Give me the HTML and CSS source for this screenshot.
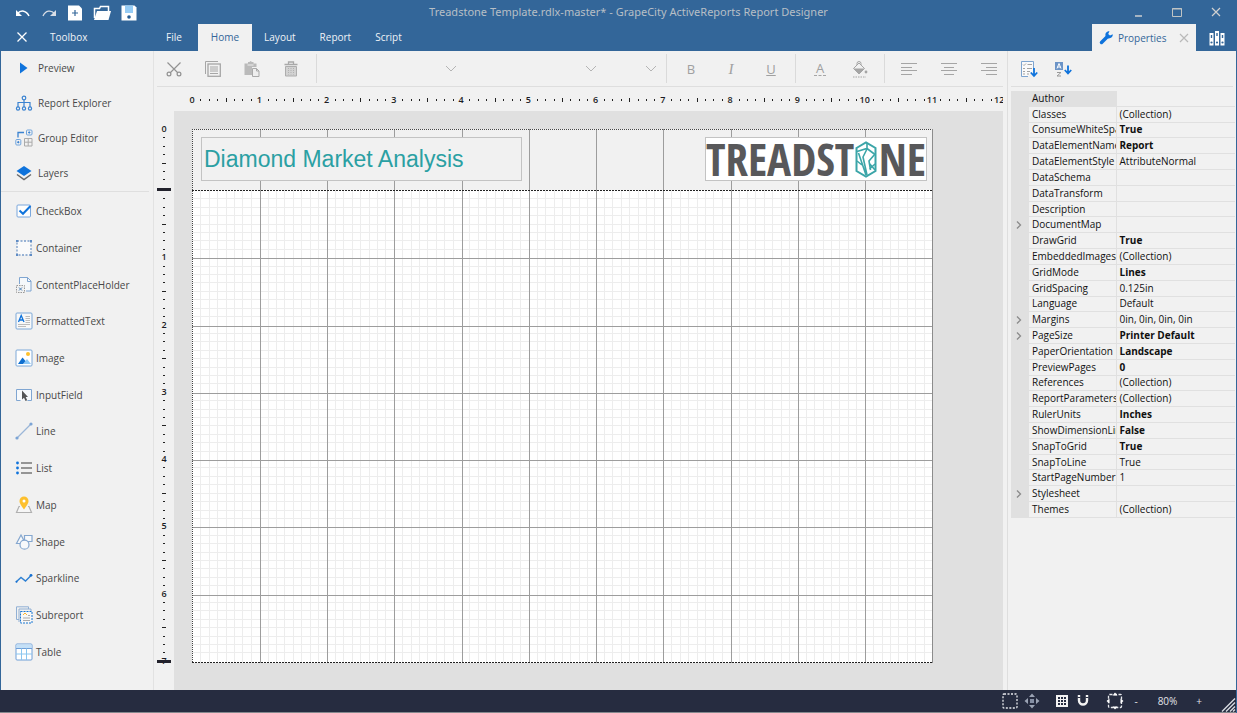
FILE: index.html
```
<!DOCTYPE html>
<html lang="en">
<head>
<meta charset="utf-8">
<title>Treadstone Template.rdlx-master* - GrapeCity ActiveReports Report Designer</title>
<link rel="stylesheet" href="styles.css">
</head>
<body>
<div class="app">
  <header class="header">
    <div class="titlebar">
      <div class="quick">
        <button aria-label="Undo"><svg width="16" height="16" viewBox="0 0 16 16"><path d="M2.500 8.500C6 4.500 11.500 5.500 14 11" fill="none" stroke="#fff" stroke-width="1.500"/><path d="M1 5v6h6z" fill="#fff"/></svg></button>
        <button aria-label="Redo"><svg width="16" height="16" viewBox="0 0 16 16"><path d="M13.500 8.500C10 4.500 4.500 5.500 2 11" fill="none" stroke="#d8dde5" stroke-width="1.300"/><path d="M15 5v6H9z" fill="#d8dde5"/></svg></button>
        <button aria-label="New"><svg width="16" height="16" viewBox="0 0 16 16"><path d="M1 .5h11l3 3v12H1z" fill="#fff"/><path d="M8 5v6M5 8h6" stroke="#336699" stroke-width="1.200"/></svg></button>
        <button aria-label="Open"><svg width="18" height="16" viewBox="0 0 18 16"><path d="M1.500 13V3.500h5l1-2h8V6" fill="none" stroke="#fff" stroke-width="1.500"/><path d="M1 15L4 6h14l-2.500 9z" fill="#fff"/></svg></button>
        <button aria-label="Save"><svg width="16" height="16" viewBox="0 0 16 16"><path d="M.5.500h13l2 2v13H.5z" fill="#fff"/><path d="M4 .5h8V8H4z" fill="#96ccf5"/><circle cx="8" cy="12" r="1.800" fill="#245c94"/></svg></button>
      </div>
      <h1 class="title">Treadstone Template.rdlx-master* - GrapeCity ActiveReports Report Designer</h1>
      <div class="window-buttons">
        <button aria-label="Minimize"><svg width="12" height="12" viewBox="0 0 12 12"><path d="M3 10h7" stroke="#c3c8cd" stroke-width="1.600"/></svg></button>
        <button aria-label="Maximize"><svg width="12" height="12" viewBox="0 0 12 12"><path d="M1.500 2.500h9v8h-9zM1 3h10" fill="none" stroke="#c0c4c4"/></svg></button>
        <button aria-label="Close"><svg width="12" height="12" viewBox="0 0 12 12"><path d="M2 2l8 8M10 2l-8 8" stroke="#d0d0d0" stroke-width="1.200"/></svg></button>
      </div>
    </div>
    <div class="tabbar">
      <div class="toolbox-head">
        <button aria-label="Close toolbox"><svg width="12" height="12" viewBox="0 0 12 12"><path d="M1.500 1.500l9 9M10.500 1.500l-9 9" stroke="#fff" stroke-width="1.300"/></svg></button>
        <span>Toolbox</span>
      </div>
      <nav class="tabs">
        <button class="tab file">File</button>
        <button class="tab home active">Home</button>
        <button class="tab">Layout</button>
        <button class="tab">Report</button>
        <button class="tab">Script</button>
      </nav>
      <div class="side-tabs">
        <button class="tab active props-tab">
          <svg width="15" height="15" viewBox="0 0 15 15"><path d="M2.500 12.500L8 7" stroke="#0f73dc" stroke-width="3.500" stroke-linecap="round"/><path d="M13.800 4.200L11 5.500 9.200 3.900 10.500 1.200C7.500 1 5.700 3.500 6.700 6.200L8.500 8.200C11.500 9 14 7 13.800 4.200z" fill="#0f73dc"/></svg>
          <span>Properties</span>
          <svg class="tab-close" width="10" height="10" viewBox="0 0 10 10"><path d="M1 1l8 8M9 1L1 9" stroke="#b9b9b9" stroke-width="1.200"/></svg>
        </button>
        <button class="library" aria-label="Layers list"><svg width="16" height="16" viewBox="0 0 16 16"><path d="M.5 3h4v12.500h-4zM6 1h4v14.500H6zM11.500 3h4v12.500h-4z" fill="#fff"/><path d="M2.500 5v3M8 3v3M13.500 5v3" stroke="#336699" stroke-width="1.400"/><circle cx="2.500" cy="12.500" r="1.100" fill="#336699"/><circle cx="8" cy="12.500" r="1.100" fill="#336699"/><circle cx="13.500" cy="12.500" r="1.100" fill="#336699"/></svg></button>
      </div>
    </div>
  </header>

  <div class="main">
    <aside class="toolbox">
      <div class="panels">
        <button class="item"><svg width="18" height="18" viewBox="0 0 18 18"><path d="M5 3.500v11L12.500 9z" fill="#0f73dc"/></svg>Preview</button>
        <button class="item"><svg width="18" height="18" viewBox="0 0 18 18" fill="none" stroke="#3b83d1" stroke-width="1.200"><circle cx="9" cy="4" r="1.800"/><path d="M9 6v7M3 13V8.500h12V13"/><circle cx="3" cy="14.500" r="1.600"/><circle cx="9" cy="14.500" r="1.600"/><circle cx="15" cy="14.500" r="1.600"/></svg>Report Explorer</button>
        <button class="item"><svg width="18" height="18" viewBox="0 0 18 18" fill="none" stroke="#3b83d1"><path d="M3 8.500V3.500h6" stroke-width="1.300"/><rect x="11.500" y="1" width="5.500" height="5" rx="1" stroke="#6fa4dd"/><circle cx="14.200" cy="3.500" r=".7" fill="#1670d0"/><rect x=".8" y="10.500" width="5" height="5.500" rx="1" stroke="#6fa4dd"/><circle cx="3.300" cy="13.200" r=".7" fill="#1670d0"/><path d="M9.500 9.500h7.500v7.500h-7.500zM13.200 9.500v7.500M9.500 13.200h7.500" stroke="#aaa"/></svg>Group Editor</button>
        <button class="item"><svg width="18" height="18" viewBox="0 0 18 18"><path d="M2 10.500l7 5 7-5" fill="none" stroke="#686868" stroke-width="1.500"/><path d="M9 2l7.500 5L9 12 1.500 7z" fill="#0f73dc"/></svg>Layers</button>
      </div>
      <div class="controls">
        <button class="item"><svg width="18" height="18" viewBox="0 0 18 18"><rect x="2" y="3" width="13.500" height="12" rx="1" fill="#fdfdfd" stroke="#7aa7dc"/><path d="M4.500 8.500L8 11.800 15.500 4" fill="none" stroke="#0f73dc" stroke-width="2"/></svg>CheckBox</button>
        <button class="item"><svg width="18" height="18" viewBox="0 0 18 18"><rect x="2" y="2" width="14" height="14" fill="#fafafa" stroke="#799cc9" stroke-width="1.300" stroke-dasharray="2 1.500"/><path d="M1 1h2v2H1zM15 1h2v2h-2zM1 15h2v2H1zM15 15h2v2h-2z" fill="#5f8cc5"/></svg>Container</button>
        <button class="item"><svg width="18" height="18" viewBox="0 0 18 18" fill="none"><path d="M4.500 8V1.500h8l3.500 3.500v10h-5" fill="#f5f8fb" stroke="#7fa5d1"/><path d="M12.500 1.500v4H16" stroke="#7fa5d1"/><rect x="1.500" y="9.500" width="8" height="7" fill="#f1f1f1" stroke="#999" stroke-dasharray="1.500 1"/><path d="M4 11.500l3 3M7 11.500l-3 3" stroke="#477fb8"/></svg>ContentPlaceHolder</button>
        <button class="item"><svg width="18" height="18" viewBox="0 0 18 18"><rect x="1" y="1" width="16" height="16" rx="1" fill="#f8f8f8" stroke="#7ca8d8"/><path d="M3.500 10L6.200 3.500 9 10M4.500 8h3.500" fill="none" stroke="#0f73dc" stroke-width="1.300"/><path d="M10.500 4.500H15M10.500 6.500H15M10.500 8.500H15M10.500 10.500H15M3 12.500h12M3 14.500h8" stroke="#bcbcbc"/></svg>FormattedText</button>
        <button class="item"><svg width="18" height="18" viewBox="0 0 18 18"><rect x="1" y="1" width="16" height="16" rx="1" fill="#fff" stroke="#7ca8d8"/><path d="M8 15l4-5 4 5z" fill="#8bc8f7"/><path d="M3 15l4.500-6.500L10.500 12 8 15z" fill="#0f6fd0"/><circle cx="13" cy="5" r="2" fill="#fdc02e"/></svg>Image</button>
        <button class="item"><svg width="18" height="18" viewBox="0 0 18 18"><path d="M5.500 14.500H1.500v-11h15v11h-4" fill="#f7f9fb" stroke="#80a6d2"/><path d="M7 4.500v9l2-1.800 1.500 3.300 1.700-.8-1.500-3.200H13z" fill="#555"/></svg>InputField</button>
        <button class="item"><svg width="18" height="18" viewBox="0 0 18 18"><path d="M2 16L16 2" stroke="#9bb6d8" stroke-width="1.300"/><circle cx="2" cy="16" r="1.600" fill="#7ca4d5"/><circle cx="16" cy="2" r="1.600" fill="#7ca4d5"/></svg>Line</button>
        <button class="item"><svg width="18" height="18" viewBox="0 0 18 18"><path d="M6 4h11M6 9h11M6 14h11" stroke="#777" stroke-width="1.700"/><circle cx="2.500" cy="4" r="1.400" fill="#0f73dc"/><circle cx="2.500" cy="9" r="1.400" fill="#0f73dc"/><circle cx="2.500" cy="14" r="1.400" fill="#0f73dc"/></svg>List</button>
        <button class="item"><svg width="18" height="18" viewBox="0 0 18 18"><path d="M5 10.500H4L1.500 16.500h15L14 10.500h-1" fill="#f6f6f6" stroke="#b0b0b0" stroke-width="1.200"/><path d="M9 13.500C6 9 4.500 7.500 4.500 5a4.500 4.500 0 0 1 9 0c0 2.500-1.500 4-4.500 8.500z" fill="#fdc02e"/><circle cx="9" cy="5" r="1.500" fill="#fff"/></svg>Map</button>
        <button class="item"><svg width="18" height="18" viewBox="0 0 18 18" fill="#f7f9fb" stroke="#85a7cf" stroke-width="1.200"><path d="M6 2l4.500 8.500h-9z"/><path d="M9.500 2.500h7.500v6h-7.500z"/><circle cx="9.500" cy="11.700" r="4.500"/></svg>Shape</button>
        <button class="item"><svg width="18" height="18" viewBox="0 0 18 18"><path d="M1 13l5-4.500 4.500 3.500L16 6.500" fill="none" stroke="#2e80d3" stroke-width="1.400"/><circle cx="1.500" cy="12.700" r="1" fill="#1670d0"/><circle cx="16" cy="6.300" r="1.400" fill="#1670d0"/></svg>Sparkline</button>
        <button class="item"><svg width="18" height="18" viewBox="0 0 18 18" fill="none"><path d="M4 13.500H1.500V.8h12V3M4 16V3h12v2" stroke="#91b0d4"/><rect x="5.500" y="5.500" width="11.500" height="11.500" fill="#f8f8f8" stroke="#1976d2" stroke-dasharray="2 1"/><path d="M8 9l2-2 2 2" stroke="#fdb72e"/><path d="M8 12h7M8 14.500h7M13 9.500h2" stroke="#aaa"/></svg>Subreport</button>
        <button class="item"><svg width="18" height="18" viewBox="0 0 18 18"><rect x="1" y="1" width="16" height="16" rx="1" fill="#fff" stroke="#6f9fd8"/><path d="M1.500 1.500h15v4h-15z" fill="#c4e0f7"/><path d="M1 5.500h16" stroke="#6f9fd8"/><path d="M1 11h16M6.500 5.500V17M11.500 5.500V17" stroke="#8ac6ef"/></svg>Table</button>
      </div>
    </aside>

    <main class="designer">
      <div class="toolbar">
        <div class="group edit">
          <button aria-label="Cut"><svg width="16" height="16" viewBox="0 0 16 16" fill="none" stroke="#929292" stroke-width="1.200"><path d="M1.500 1.500L12 12M14.500 1.500L4 12"/><circle cx="3" cy="13" r="1.900"/><circle cx="13" cy="13" r="1.900"/></svg></button>
          <button aria-label="Copy"><svg width="16" height="16" viewBox="0 0 16 16" fill="none" stroke="#a6a6a6"><path d="M.5 13V.5H13" /><rect x="3" y="3" width="12.300" height="12.300" stroke-width="1.300"/><path d="M5 6h8M5 8h8M5 10h8M5 12.500h8"/></svg></button>
          <button aria-label="Paste"><svg width="16" height="16" viewBox="0 0 16 16"><path d="M.5 2.500H4V1h1.500L6.500 0 8 1h1.500v1.500h3V6H8v8H.5z" fill="#bababa"/><path d="M3.500 4h6" stroke="#eee"/><path d="M8.500 7.500h4l2.500 2.500v5.500H8.500z" fill="#eee" stroke="#a9a9a9"/><path d="M12.500 7.500V10H15" fill="none" stroke="#a9a9a9"/></svg></button>
          <button aria-label="Delete"><svg width="16" height="16" viewBox="0 0 16 16"><path d="M1.500 3.500h13M5.500 3V1h5v2" fill="none" stroke="#a9a9a9" stroke-width="1.300"/><path d="M2.500 5.500h11V15h-11z" fill="#d2d2d2" stroke="#adadad"/><path d="M5.500 7v6.500M8 7v6.500M10.500 7v6.500" stroke="#b1b1b1" stroke-dasharray="1 1"/></svg></button>
        </div>
        <div class="group fonts">
          <label class="combo wide"><select aria-label="Font"></select><svg width="12" height="8" viewBox="0 0 12 8"><path d="M1 1l5 5 5-5" fill="none" stroke="#b4b4b4"/></svg></label>
          <label class="combo wide"><select aria-label="Style"></select><svg width="12" height="8" viewBox="0 0 12 8"><path d="M1 1l5 5 5-5" fill="none" stroke="#b4b4b4"/></svg></label>
          <label class="combo"><select aria-label="Size"></select><svg width="12" height="8" viewBox="0 0 12 8"><path d="M1 1l5 5 5-5" fill="none" stroke="#b4b4b4"/></svg></label>
        </div>
        <div class="group">
          <button class="bold">B</button>
          <button class="italic">I</button>
          <button class="underline">U</button>
        </div>
        <div class="group">
          <button class="color"><span>A</span></button>
          <button aria-label="Fill color"><svg width="16" height="18" viewBox="0 0 16 18"><path d="M5 5V3.500a2 2 0 0 1 4 0V5" fill="none" stroke="#a5a5a5"/><path d="M7 3L12.500 8.500 7 14 1.500 8.500z" fill="#f1f1f1" stroke="#a5a5a5"/><path d="M1.500 8.500h11L7 14z" fill="#a5a5a5"/><circle cx="14" cy="12" r="1.400" fill="#a5a5a5"/><path d="M1 17h13" stroke="#a5a5a5" stroke-dasharray="1.500 1"/></svg></button>
        </div>
        <div class="group">
          <button aria-label="Align left"><svg width="16" height="14" viewBox="0 0 16 14"><path d="M0 1.500h16M0 5.500h11M0 8.500h16M0 12.500h11" stroke="#a5a5a5"/></svg></button>
          <button aria-label="Align center"><svg width="16" height="14" viewBox="0 0 16 14"><path d="M0 1.500h16M3 5.500h10M0 8.500h16M3 12.500h10" stroke="#a5a5a5"/></svg></button>
          <button aria-label="Align right"><svg width="16" height="14" viewBox="0 0 16 14"><path d="M0 1.500h16M5 5.500h11M0 8.500h16M5 12.500h11" stroke="#a5a5a5"/></svg></button>
        </div>
      </div>
      <svg class="ruler-h" id="ruler-h"></svg>
      <div class="workspace">
        <svg class="ruler-v" id="ruler-v"></svg>
        <div class="canvas">
          <div class="sheet">
            <svg class="grid" id="grid"></svg>
            <div class="page-header">
              <div class="textbox">Diamond Market Analysis</div>
              <div class="logo">
                <span>TREADST</span>
                <svg width="22" height="37" viewBox="0 0 22 37" fill="none" stroke="#3ba5a8" stroke-width="2"><path d="M1.500 7L11 1.500 20.500 7V30L11 35.500 1.500 30z"/><path d="M2 10.500l10-3 8 6M12 7.500V2M3.500 12l7.500 22M12 8l-4 8 4 18M20 13l-6 7 1.500 9M2 20l5 4M14.500 28l5.500-5M14 22l6 7" stroke-width="1.600"/></svg>
                <span>NE</span>
              </div>
            </div>
          </div>
        </div>
      </div>
    </main>

    <aside class="properties">
      <div class="prop-tools">
        <button aria-label="Categorized"><svg width="18" height="18" viewBox="0 0 18 18" fill="none"><path d="M8 16.500H1.500V1.500h12V10" fill="#fafafa" stroke="#7da4d0"/><path d="M3 4.500l1 1 2-2M7.500 4.500h4.500M3 8.500h2M7 8.500h5M3 11.500h2M7 11.500h3M3 14h2M7 14h2" stroke="#a2a2a2"/><path d="M14 8v8M10.800 12.500L14 16l3.200-3.500" stroke="#0f73dc" stroke-width="1.800"/></svg></button>
        <button aria-label="Sort alphabetically"><svg width="18" height="18" viewBox="0 0 18 18" fill="none"><path d="M1 2h8v8H1z" fill="#6c94c7"/><path d="M3 8.500L5 3.500 7 8.500M3.500 7h3" stroke="#fff"/><path d="M3 12.500h4L3 16h4" stroke="#999"/><path d="M14 5.500v8M10.800 10L14 13.500 17.200 10" stroke="#0f73dc" stroke-width="1.800"/></svg></button>
      </div>
      <table class="prop-grid">
        <colgroup><col class="c-gutter"><col class="c-name"><col></colgroup>
        <tbody>
          <tr class="selected"><td></td><th scope="row">Author</th><td></td></tr>
          <tr><td></td><th scope="row">Classes</th><td>(Collection)</td></tr>
          <tr><td></td><th scope="row">ConsumeWhiteSpace</th><td><b>True</b></td></tr>
          <tr><td></td><th scope="row">DataElementName</th><td><b>Report</b></td></tr>
          <tr><td></td><th scope="row">DataElementStyle</th><td>AttributeNormal</td></tr>
          <tr><td></td><th scope="row">DataSchema</th><td></td></tr>
          <tr><td></td><th scope="row">DataTransform</th><td></td></tr>
          <tr><td></td><th scope="row">Description</th><td></td></tr>
          <tr><td><svg class="chev" width="6" height="8" viewBox="0 0 6 8"><path d="M1 .5L4.500 4 1 7.500"/></svg></td><th scope="row">DocumentMap</th><td></td></tr>
          <tr><td></td><th scope="row">DrawGrid</th><td><b>True</b></td></tr>
          <tr><td></td><th scope="row">EmbeddedImages</th><td>(Collection)</td></tr>
          <tr><td></td><th scope="row">GridMode</th><td><b>Lines</b></td></tr>
          <tr><td></td><th scope="row">GridSpacing</th><td>0.125in</td></tr>
          <tr><td></td><th scope="row">Language</th><td>Default</td></tr>
          <tr><td><svg class="chev" width="6" height="8" viewBox="0 0 6 8"><path d="M1 .5L4.500 4 1 7.500"/></svg></td><th scope="row">Margins</th><td>0in, 0in, 0in, 0in</td></tr>
          <tr><td><svg class="chev" width="6" height="8" viewBox="0 0 6 8"><path d="M1 .5L4.500 4 1 7.500"/></svg></td><th scope="row">PageSize</th><td><b>Printer Default</b></td></tr>
          <tr><td></td><th scope="row">PaperOrientation</th><td><b>Landscape</b></td></tr>
          <tr><td></td><th scope="row">PreviewPages</th><td><b>0</b></td></tr>
          <tr><td></td><th scope="row">References</th><td>(Collection)</td></tr>
          <tr><td></td><th scope="row">ReportParameters</th><td>(Collection)</td></tr>
          <tr><td></td><th scope="row">RulerUnits</th><td><b>Inches</b></td></tr>
          <tr><td></td><th scope="row">ShowDimensionLines</th><td><b>False</b></td></tr>
          <tr><td></td><th scope="row">SnapToGrid</th><td><b>True</b></td></tr>
          <tr><td></td><th scope="row">SnapToLine</th><td>True</td></tr>
          <tr><td></td><th scope="row">StartPageNumber</th><td>1</td></tr>
          <tr><td><svg class="chev" width="6" height="8" viewBox="0 0 6 8"><path d="M1 .5L4.500 4 1 7.500"/></svg></td><th scope="row">Stylesheet</th><td></td></tr>
          <tr><td></td><th scope="row">Themes</th><td>(Collection)</td></tr>
        </tbody>
      </table>
    </aside>
  </div>

  <footer class="status">
    <button aria-label="Select mode"><svg width="16" height="16" viewBox="0 0 16 16"><rect x="1" y="1" width="14" height="14" rx="1" fill="none" stroke="#e6e8ec" stroke-width="1.300" stroke-dasharray="2 1.500"/></svg></button>
    <button aria-label="Pan mode"><svg width="16" height="16" viewBox="0 0 16 16" fill="#9ba3b4"><path d="M8 .5l3 3.500H5zM8 15.500L5 12h6zM.5 8L4 5v6zM15.500 8L12 11V5z"/><path d="M6 6h4v4H6z" fill="#858fa4"/></svg></button>
    <button class="gap" aria-label="Show grid"><svg width="14" height="14" viewBox="0 0 14 14"><path d="M1 1h12v12H1z" fill="#f3f3f3"/><path d="M3 3h2v2H3zM6 3h2v2H6zM9 3h2v2H9zM3 6h2v2H3zM6 6h2v2H6zM9 6h2v2H9zM3 9h2v2H3zM6 9h2v2H6zM9 9h2v2H9z" fill="#262c40"/></svg></button>
    <button aria-label="Snap to lines"><svg width="16" height="14" viewBox="0 0 16 14"><path d="M4 1v5.500a4 4 0 0 0 8 0V1" fill="none" stroke="#f3f3f3" stroke-width="2.400"/><path d="M2.500 3.500h3M10.500 3.500h3" stroke="#262c40"/></svg></button>
    <button class="gap" aria-label="Fit to window"><svg width="18" height="18" viewBox="0 0 18 18"><rect x="2.500" y="2.500" width="13" height="13" rx="1" fill="none" stroke="#e6e8ec" stroke-width="1.300" stroke-dasharray="3 1.500"/><path d="M9 .5L11.500 3.500h-5zM9 17.500L6.500 14.500h5zM.5 9L3.500 6.500v5zM17.500 9L14.500 11.500v-5z" fill="#fff"/></svg></button>
    <button class="zoom-step">-</button>
    <output class="zoom">80%</output>
    <button class="zoom-step">+</button>
    <svg class="grip" width="15" height="15" viewBox="0 0 15 15"><path d="M1 14.500L14 1.500M5 14.500L14 5.500M9 14.500L14 9.500M12 14.500l2-2" stroke="#d7dae0" stroke-width="1.400"/></svg>
  </footer>
</div>
<script src="designer.js"></script>
</body>
</html>
```
FILE: styles.css
```
* { box-sizing: border-box; }

body {
  margin: 0;
  font: 10px/14px "Open Sans", "Noto Sans", sans-serif;
  color: #484848;
}

button {
  display: flex;
  align-items: center;
  justify-content: center;
  padding: 0;
  border: 0;
  background: none;
  color: inherit;
  font: inherit;
}

svg { display: block; flex: none; }

.app {
  display: flex;
  flex-direction: column;
  height: 100vh;
  border-right: 1px solid #336699;
  background: #f1f1f1;
  overflow: hidden;
}

/* Title bar and tabs */
.header { background: #336699; color: #f0f3f7; margin-right: -1px; }

.titlebar {
  display: grid;
  grid-template-columns: 1fr auto 1fr;
  align-items: center;
  height: 24px;
}
.quick { display: flex; align-items: center; gap: 10px; padding: 2px 0 0 15px; }
.title {
  margin: 0;
  padding-left: 20px;
  font: 400 11px/14px "Noto Sans", sans-serif;
  color: #b7bfc6;
}
.window-buttons { display: flex; justify-content: flex-end; gap: 27px; padding-right: 15px; }

.tabbar { display: flex; height: 27px; }
.toolbox-head { display: flex; align-items: center; gap: 22px; width: 153px; padding: 0 0 1px 16px; }
.tabs { display: flex; flex: 1; }
.tab { padding: 0 12px 1px; }
.tab.file { padding-left: 13px; padding-right: 16px; }
.tab.home { padding-left: 13px; padding-right: 13px; }
.tab.active { background: #f1f1f1; color: #336699; }
.side-tabs { display: flex; }
.tab.props-tab { gap: 4px; width: 104px; padding: 0 7px 0 7px; }
.tab-close { margin-left: auto; }
.library { width: 41px; }

.main { display: flex; flex: 1; min-height: 0; }

/* Toolbox */
.toolbox {
  display: flex;
  flex-direction: column;
  width: 154px;
  border-left: 1px solid #336699;
  border-right: 1px solid #e2e2e2;
}
.panels { margin-right: 4px; border-bottom: 1px solid #dfdfdf; }
.item { width: 100%; gap: 3px; padding-left: 14px; justify-content: flex-start; }
.panels .item { height: 35px; gap: 5px; padding-bottom: 1px; }
.controls { display: flex; flex-direction: column; flex: 1; padding: 1px 0 20px; }
.controls .item { flex: 1; }

/* Designer */
.designer { display: flex; flex-direction: column; flex: 1; min-width: 0; }

.toolbar {
  display: flex;
  height: 36px;
  margin: 0 0 0 3px;
  border-bottom: 1px solid #dedede;
}
.group { display: flex; align-items: center; margin: 3px 0; padding: 0 4px; border-right: 1px solid #dadada; }
.group button { width: 40px; height: 28px; color: #a0a0a0; font-size: 13px; }
.group.edit { padding: 0 6px 0 0; margin-left: -3px; }
.group.edit button { width: 39px; }
.group.fonts { padding-right: 5px; }
.group:last-child { border: 0; padding-right: 0; }
.combo { display: grid; align-items: center; width: 60px; }
.combo.wide { width: 140px; }
.combo select {
  grid-area: 1 / 1;
  width: 100%;
  height: 24px;
  border: 0;
  background: none;
  appearance: none;
}
.combo svg { grid-area: 1 / 1; justify-self: end; margin-right: 4px; pointer-events: none; }
.group .italic { font-family: "Liberation Serif", serif; font-size: 15px; font-style: italic; }
.group .underline { text-decoration: underline; }
.color span { border-bottom: 1px dashed #a5a5a5; padding: 0 2px; }

.ruler-h { width: 100%; height: 24px; }
.ruler-h text, .ruler-v text {
  font: 600 9px "Open Sans", "Noto Sans", sans-serif;
  text-anchor: middle;
  fill: #1c1c24;
}
.workspace { display: flex; flex: 1; min-height: 0; }
.ruler-v { width: 20px; height: 100%; }
.canvas { flex: 1; min-width: 0; padding: 18px; background: #e0e0e0; }

.sheet { display: grid; width: 741px; height: 534px; background: #fff; }
.grid { grid-area: 1 / 1; width: 100%; height: 100%; }
.page-header {
  grid-area: 1 / 1;
  display: flex;
  align-items: flex-start;
  justify-content: space-between;
  height: 61px;
  padding: 8px 6px 0 9px;
}
.textbox, .logo { height: 44px; border: 1px solid #c3c3c3; background: #f1f1f1; }
.textbox {
  width: 321px;
  padding-left: 2px;
  font: 23px/42px "Liberation Sans", sans-serif;
  color: #2ba0a3;
}
.logo {
  display: flex;
  align-items: center;
  justify-content: space-between;
  width: 222px;
  background: #fff;
  color: #58585a;
  font: 700 45px/42px "Open Sans Condensed", "Liberation Sans Narrow", sans-serif;
}

/* Properties */
.properties { width: 233px; padding: 0 1px 0 4px; border-left: 4px solid #f1f1f1; box-shadow: inset 1px 0 #dedede; }
.prop-tools {
  display: flex;
  align-items: center;
  gap: 16px;
  height: 36px;
  margin: 0 2px 4px 0;
  padding-left: 9px;
  border-bottom: 1px solid #dedede;
}
.prop-grid {
  width: 100%;
  height: 427px;
  table-layout: fixed;
  border-collapse: collapse;
  color: #101010;
}
.c-gutter { width: 18px; }
.c-name { width: 87px; }
.prop-grid td, .prop-grid th {
  padding: 0 2px 0 3px;
  border-bottom: 1px solid #e0e0e0;
  font-weight: 400;
  line-height: 13px;
  text-align: left;
  white-space: nowrap;
  overflow: hidden;
}
.prop-grid th { padding: 0 0 0 3px; border-right: 1px solid #e0e0e0; }
.prop-grid td:first-child { padding: 0 0 0 5px; background: #e0e0e0; }
.selected th { background: #e0e0e0; }
.chev { fill: none; stroke: #8b8b8b; stroke-width: 1.3; }

/* Status bar */
.status {
  display: flex;
  align-items: center;
  justify-content: flex-end;
  gap: 6px;
  height: 23px;
  margin-right: -1px;
  border-bottom: 1px solid #85898e;
  background: #262c40;
  color: #e2e4e9;
}
.status .gap { margin-left: 9px; }
.zoom-step { width: 12px; }
.zoom { width: 39px; text-align: center; }
.grip { margin: 6px 1px 0 10px; }
```
FILE: designer.js
```
const NS = "http://www.w3.org/2000/svg";
const INCH = 67.27;
const HEADER = 61;

function add(svg, name, attrs, text) {
  const el = document.createElementNS(NS, name);
  for (const key in attrs) el.setAttribute(key, attrs[key]);
  if (text !== undefined) el.textContent = text;
  svg.appendChild(el);
}

function box(svg, x, y, width, height, fill) {
  add(svg, "rect", { x: Math.round(x), y: Math.round(y), width, height, fill });
}

// Horizontal ruler: a dot each eighth, a bar each half inch
const h = document.getElementById("ruler-h");
for (let i = 0; i <= 96; i++) {
  const x = 38 + i * INCH / 8;
  if (i % 8 === 0) add(h, "text", { x, y: 16 }, i / 8);
  else if (i % 4 === 0) box(h, x, 11, 1, 4, "#222");
  else box(h, x, 12, 1, 2, "#222");
}

// Vertical ruler: restarts after the page header
const v = document.getElementById("ruler-v");
function vertical(start, length) {
  for (let i = 0; i * INCH / 8 < length; i++) {
    const y = start + i * INCH / 8;
    if (i % 8 === 0) { if (start < 50 || i > 0) add(v, "text", { x: 10, y: y + 3 }, i / 8); }
    else if (i % 4 === 0) box(v, 8, y, 4, 1, "#222");
    else box(v, 9, y, 2, 1, "#222");
  }
}
vertical(18, 58);
vertical(79, 472);
box(v, 3, 77, 14, 3, "#22222c");
box(v, 3, 549, 14, 3, "#22222c");

// Sheet grid
const g = document.getElementById("grid");
box(g, 0, 0, 741, HEADER, "#f1f1f1");
for (let i = 1; i < 88; i++) if (i % 8) box(g, i * INCH / 8, HEADER, 1, 473, "#ededed");
for (let i = 1; i < 56; i++) if (i % 8) box(g, 0, HEADER + i * INCH / 8, 741, 1, "#ededed");
for (let i = 1; i < 11; i++) box(g, i * INCH + 0.5, 0, 1, 534, "#9d9d9d");
for (let i = 1; i < 7; i++) box(g, 0, HEADER + 1 + i * INCH, 741, 1, "#9d9d9d");
const edge = { stroke: "#444", fill: "none", "stroke-dasharray": "1 1" };
add(g, "path", { d: "M0 .5H741M.5 0V534", ...edge });
add(g, "path", { d: "M740.5 0V534", stroke: "#8c8c8c" });
add(g, "path", { d: "M0 61.5H741M0 533.5H741", stroke: "#222", "stroke-dasharray": "2 1" });
```
